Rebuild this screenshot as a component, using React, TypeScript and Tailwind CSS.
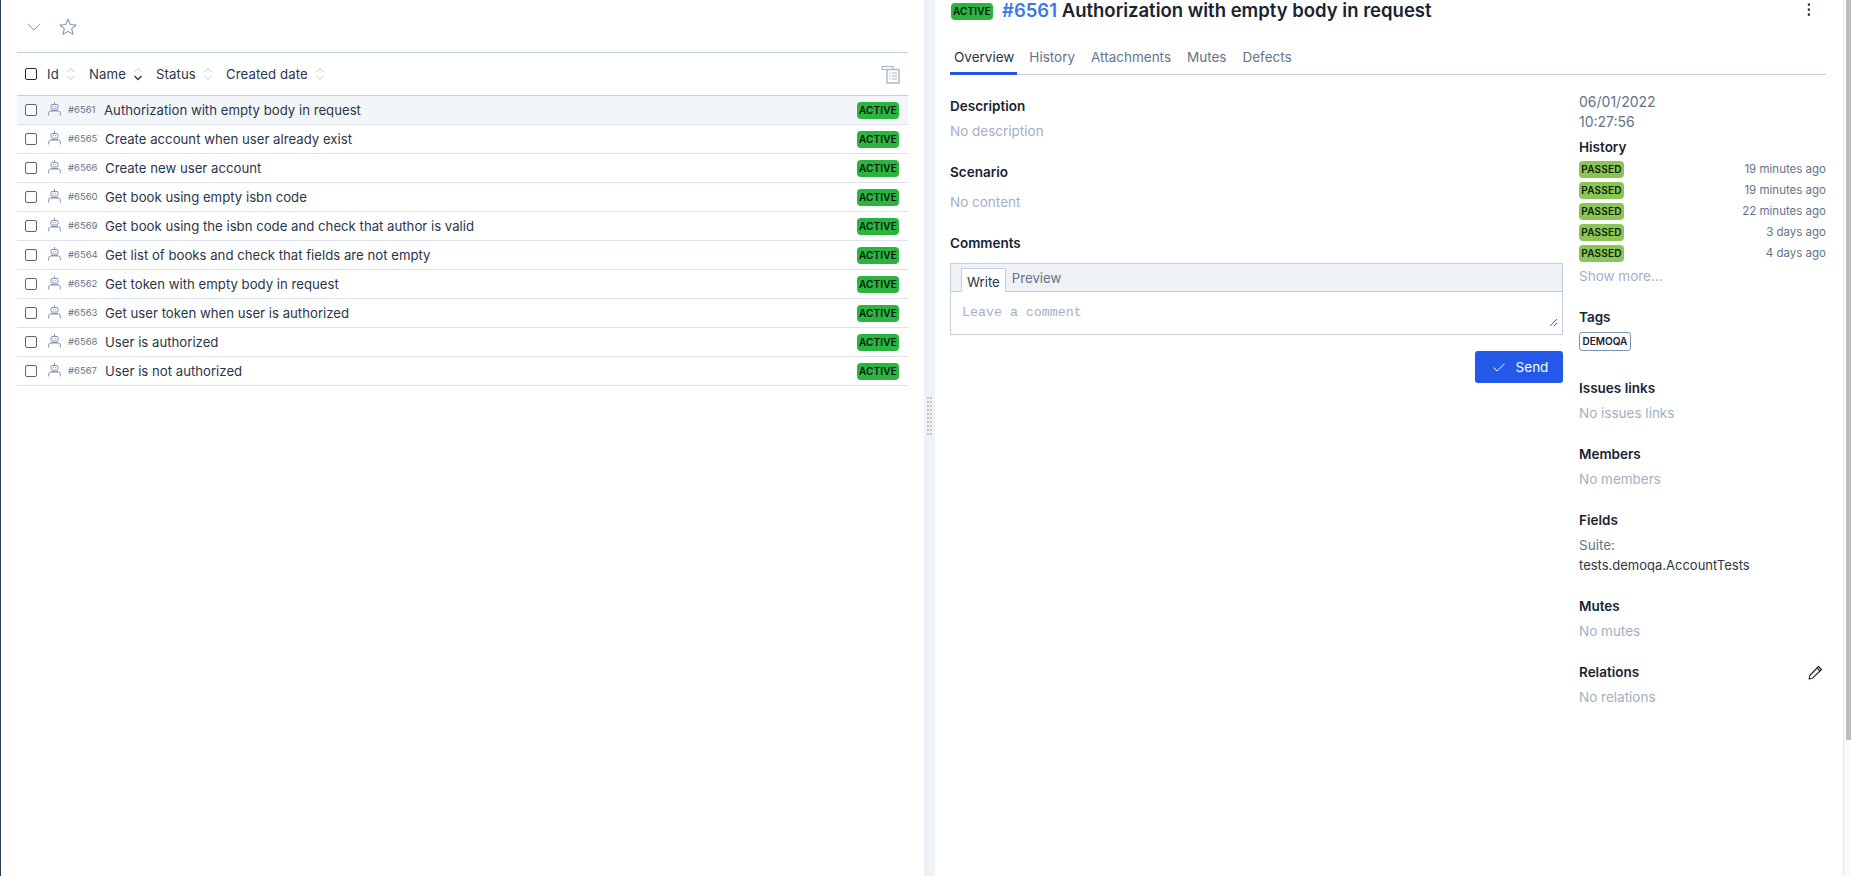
import React from "react";

const rows: [string, string][] = [
  ["#6561", "Authorization with empty body in request"],
  ["#6565", "Create account when user already exist"],
  ["#6566", "Create new user account"],
  ["#6560", "Get book using empty isbn code"],
  ["#6569", "Get book using the isbn code and check that author is valid"],
  ["#6564", "Get list of books and check that fields are not empty"],
  ["#6562", "Get token with empty body in request"],
  ["#6563", "Get user token when user is authorized"],
  ["#6568", "User is authorized"],
  ["#6567", "User is not authorized"],
];

function Sort({ active }: { active?: boolean }) {
  return (
    <svg width="10" height="14" viewBox="0 0 10 14" fill="none" className="block shrink-0">
      <path d="M1.5 5 L5 1.5 L8.5 5" stroke="#c3ccda" strokeWidth="1" />
      <path d="M1.5 9 L5 12.5 L8.5 9" stroke={active ? "#2b3648" : "#c3ccda"} strokeWidth={active ? 1.3 : 1} />
    </svg>
  );
}

function Robot() {
  return (
    <svg width="13" height="14" viewBox="0 0 13 14" fill="none" stroke="#8496b0" strokeWidth="1" className="block shrink-0">
      <path d="M6.5 0 V2" />
      <rect x="3" y="2.5" width="7" height="4.5" rx="1" />
      <path d="M4.8 4.6 h1 M7.2 4.6 h1" />
      <path d="M3 8.5 H10" />
      <path d="M0.7 13.5 V11 a2 2 0 0 1 2 -2 h7.6 a2 2 0 0 1 2 2 V13.5" />
    </svg>
  );
}

function Badge() {
  return (
    <span className="flex h-[17px] w-[42px] shrink-0 items-center justify-center rounded-[4px] bg-[#2bb440] text-[10px] font-semibold tracking-[0.2px] text-[#07170b]">
      ACTIVE
    </span>
  );
}

function Section({ title, children, className }: { title: string; children: React.ReactNode; className?: string }) {
  return (
    <div className={className}>
      <div className="h-5 text-[13.5px] leading-5 font-semibold text-[#1a2332]">{title}</div>
      {children}
    </div>
  );
}

function Muted({ children, className }: { children: React.ReactNode; className?: string }) {
  return <div className={`h-5 text-[13.5px] leading-5 text-[#a3b0c4] ${className ?? ""}`}>{children}</div>;
}

function Checkbox({ dark }: { dark?: boolean }) {
  return (
    <span className={`block h-3 w-3 shrink-0 rounded-[2px] border bg-white ${dark ? "border-[#1f2937]" : "border-[#5b6675]"}`} />
  );
}

export default function App() {
  const history = ["19 minutes ago", "19 minutes ago", "22 minutes ago", "3 days ago", "4 days ago"];
  return (
    <div className="flex h-[876px] w-[1851px] overflow-hidden bg-white text-[14px] text-[#2b3648] [font-family:Inter,'Noto_Sans',sans-serif]">
      <div className="w-px shrink-0 bg-[#2c3e5a]" />
      {/* Left list panel */}
      <div className="flex w-[923px] shrink-0 flex-col pl-4 pr-[16px]">
        <div className="flex h-[53px] shrink-0 items-center gap-[18px] border-b border-[#bfcddc] pl-[10px] pt-[1px]">
          <svg width="14" height="8" viewBox="0 0 14 8" fill="none" stroke="#8496b0" strokeWidth="1">
            <path d="M1 1 L7 7 L13 1" />
          </svg>
          <svg width="18" height="18" viewBox="0 0 18 18" fill="none" stroke="#8496b0" strokeWidth="1.1" strokeLinejoin="round">
            <path d="M9 1.2 L11.3 6.5 L17 7 L12.7 10.7 L14 16.4 L9 13.4 L4 16.4 L5.3 10.7 L1 7 L6.7 6.5 Z" />
          </svg>
        </div>
        <div className="flex h-[43px] shrink-0 items-center border-b border-[#bfcddc] pl-2 pr-[8px] text-[13.2px] tracking-[0.1px]">
          <Checkbox dark />
          <span className="ml-[10px] mt-[1px] w-[9px]">Id</span>
          <span className="ml-[10px]"><Sort /></span>
          <span className="ml-[13px] mt-[1px] w-[36px]">Name</span>
          <span className="ml-[8px]"><Sort active /></span>
          <span className="ml-[13px] mt-[1px] w-[40px]">Status</span>
          <span className="ml-[7px]"><Sort /></span>
          <span className="ml-[13px] mt-[1px] w-[80px] whitespace-nowrap">Created date</span>
          <span className="ml-[9px]"><Sort /></span>
          <svg width="19" height="19" viewBox="0 0 19 19" fill="none" stroke="#a9b6c9" className="ml-auto">
            <path d="M6 4.5 H1 V1.5 H12 V4" strokeWidth="1.2" />
            <rect x="6" y="4.5" width="12" height="13.5" strokeWidth="1.4" />
            <path d="M8.5 8 h1.2 M11 8 h5 M8.5 11 h1.2 M11 11 h5 M8.5 14 h1.2 M11 14 h5" strokeWidth="1" />
          </svg>
        </div>
        {rows.map(([id, name], i) => (
          <div
            key={id}
            className={`flex h-[29px] shrink-0 items-center border-b border-[#dde3ec] pl-2 pr-[9px] ${i === 0 ? "bg-[#f2f6f9]" : ""}`}
          >
            <Checkbox />
            <span className="ml-[11px] -mt-[3px]"><Robot /></span>
            <span className={`ml-[7px] text-[9.5px] text-[#65738a] ${i === 0 ? "w-[36px]" : "w-[37px]"}`}>{id}</span>
            <span className="mt-[1px] text-[13.2px] text-[#2b3648]">{name}</span>
            <span className="ml-auto"><Badge /></span>
          </div>
        ))}
      </div>
      {/* Gutter */}
      <div className="flex w-[11px] shrink-0 items-center justify-center bg-[#eef1f6]">
        <div className="mb-[44px] grid grid-cols-2 gap-x-[1px] gap-y-[2px]">
          {Array.from({ length: 20 }).map((_, i) => (
            <span key={i} className="block h-[2px] w-[2px] bg-[#c4c4c4]" />
          ))}
        </div>
      </div>
      {/* Right detail panel */}
      <div className="flex min-w-0 flex-1 flex-col pl-[15px] pr-[17px]">
        <div className="flex h-[23px] shrink-0 items-center">
          <span className="ml-[1px] mr-[9px]"><Badge /></span>
          <span className="mb-[2px] text-[18.5px] leading-[21px] font-semibold text-[#1a2332]">
            <span className="text-[#3b78e7]">#6561</span> Authorization with empty body in request
          </span>
          <svg width="4" height="14" viewBox="0 0 4 14" fill="#1a2332" className="ml-auto mr-[15px] -mt-[4px]">
            <rect x="0.8" y="0.5" width="2.2" height="2.2" />
            <rect x="0.8" y="5.5" width="2.2" height="2.2" />
            <rect x="0.8" y="10.5" width="2.2" height="2.2" />
          </svg>
        </div>
        <div className="mt-[24px] flex h-[28px] shrink-0 gap-4 border-b border-[#c3cfdd] text-[13.5px] text-[#65738a]">
          <div className="-mb-px -mr-[4px] border-b-[3px] border-[#2358e8] pl-1 pr-[3px] text-[#2b3648]">Overview</div>
          <div>History</div>
          <div>Attachments</div>
          <div>Mutes</div>
          <div>Defects</div>
        </div>
        <div className="flex gap-4">
          <div className="w-[613px] shrink-0 pt-[21px]">
            <Section title="Description">
              <Muted className="mt-[5px]">No description</Muted>
            </Section>
            <Section title="Scenario" className="mt-[21px]">
              <Muted className="mt-[10px]">No content</Muted>
            </Section>
            <Section title="Comments" className="mt-[21px]">
              <div className="mt-[10px] h-[72px] border border-[#c3cfdd]">
                <div className="flex h-7 items-start border-b border-[#c3cfdd] bg-[#eef1f6] pl-[10px] text-[13.2px]">
                  <div className="mt-1 h-[24px] border border-b-0 border-[#c3cfdd] bg-white px-[5px] pt-[3px] leading-5 text-[#2b3648]">Write</div>
                  <div className="ml-[6px] mt-[4px] leading-5 text-[#65738a]">Preview</div>
                </div>
                <div className="relative h-[42px] pl-[11px] pt-[11px] text-[13.3px] leading-5 text-[#a3b0c4] [font-family:'Liberation_Mono',monospace]">
                  Leave a comment
                  <svg width="7" height="7" viewBox="0 0 7 7" stroke="#333" strokeWidth="0.8" className="absolute bottom-[8px] right-[5px]">
                    <path d="M0 7 L7 0 M4 7 L7 4" />
                  </svg>
                </div>
              </div>
              <div className="mt-4 flex justify-end">
                <button className="flex h-8 w-[88px] items-center justify-center gap-[11px] rounded-[3px] bg-[#2358e8] pl-[3px] text-[13.5px] text-white">
                  <svg width="12" height="9" viewBox="0 0 12 9" fill="none" stroke="white" strokeWidth="1">
                    <path d="M0.5 4.5 L4 8 L11.5 0.8" />
                  </svg>
                  Send
                </button>
              </div>
            </Section>
          </div>
          <div className="w-[247px] shrink-0 pt-[17px]">
            <div className="text-[14px] leading-5 text-[#65738a]">06/01/2022<br />10:27:56</div>
            <Section title="History" className="mt-[5px]">
              <div className="mt-[4px] flex flex-col gap-1">
                {history.map((h, i) => (
                  <div key={i} className="flex h-[17px] items-center justify-between">
                    <span className="flex h-[17px] w-[45px] items-center justify-center rounded-[4px] bg-[#8bc557] text-[10px] font-semibold tracking-[0.2px] text-[#10200a]">PASSED</span>
                    <span className="text-[11.5px] text-[#65738a]">{h}</span>
                  </div>
                ))}
              </div>
              <Muted className="mt-[4px]">Show more...</Muted>
            </Section>
            <Section title="Tags" className="mt-[21px]">
              <span className="mt-[5px] flex h-[19px] w-[52px] items-center justify-center rounded-[3px] border border-[#7f93b2] text-[10px] font-semibold text-[#1a2332]">DEMOQA</span>
            </Section>
            <Section title="Issues links" className="mt-[27px]">
              <Muted className="mt-[5px]">No issues links</Muted>
            </Section>
            <Section title="Members" className="mt-[21px]">
              <Muted className="mt-[5px]">No members</Muted>
            </Section>
            <Section title="Fields" className="mt-[21px]">
              <div className="mt-[5px] h-5 text-[13.5px] leading-5 text-[#65738a]">Suite:</div>
              <div className="h-5 text-[13px] leading-5 text-[#2b3648]">tests.demoqa.AccountTests</div>
            </Section>
            <Section title="Mutes" className="mt-[21px]">
              <Muted className="mt-[5px]">No mutes</Muted>
            </Section>
            <div className="mt-[21px] flex h-5 items-center justify-between">
              <div className="text-[13.5px] font-semibold text-[#1a2332]">Relations</div>
              <svg width="15" height="15" viewBox="0 0 15 15" fill="none" stroke="#1a2332" strokeWidth="1.1" className="mr-[3px]">
                <path d="M1 14 L1.8 10.5 L10.5 1.5 L13.5 4.5 L4.5 13.2 Z M9 3 L12 6" strokeLinejoin="round" />
              </svg>
            </div>
            <Muted className="mt-[5px]">No relations</Muted>
          </div>
        </div>
      </div>
      {/* Scrollbar */}
      <div className="w-[8px] shrink-0 border-l border-[#e5e5e5] bg-[#fafafa] pl-[2px]">
        <div className="h-[740px] w-full bg-[#bdbdbd]" />
      </div>
    </div>
  );
}
